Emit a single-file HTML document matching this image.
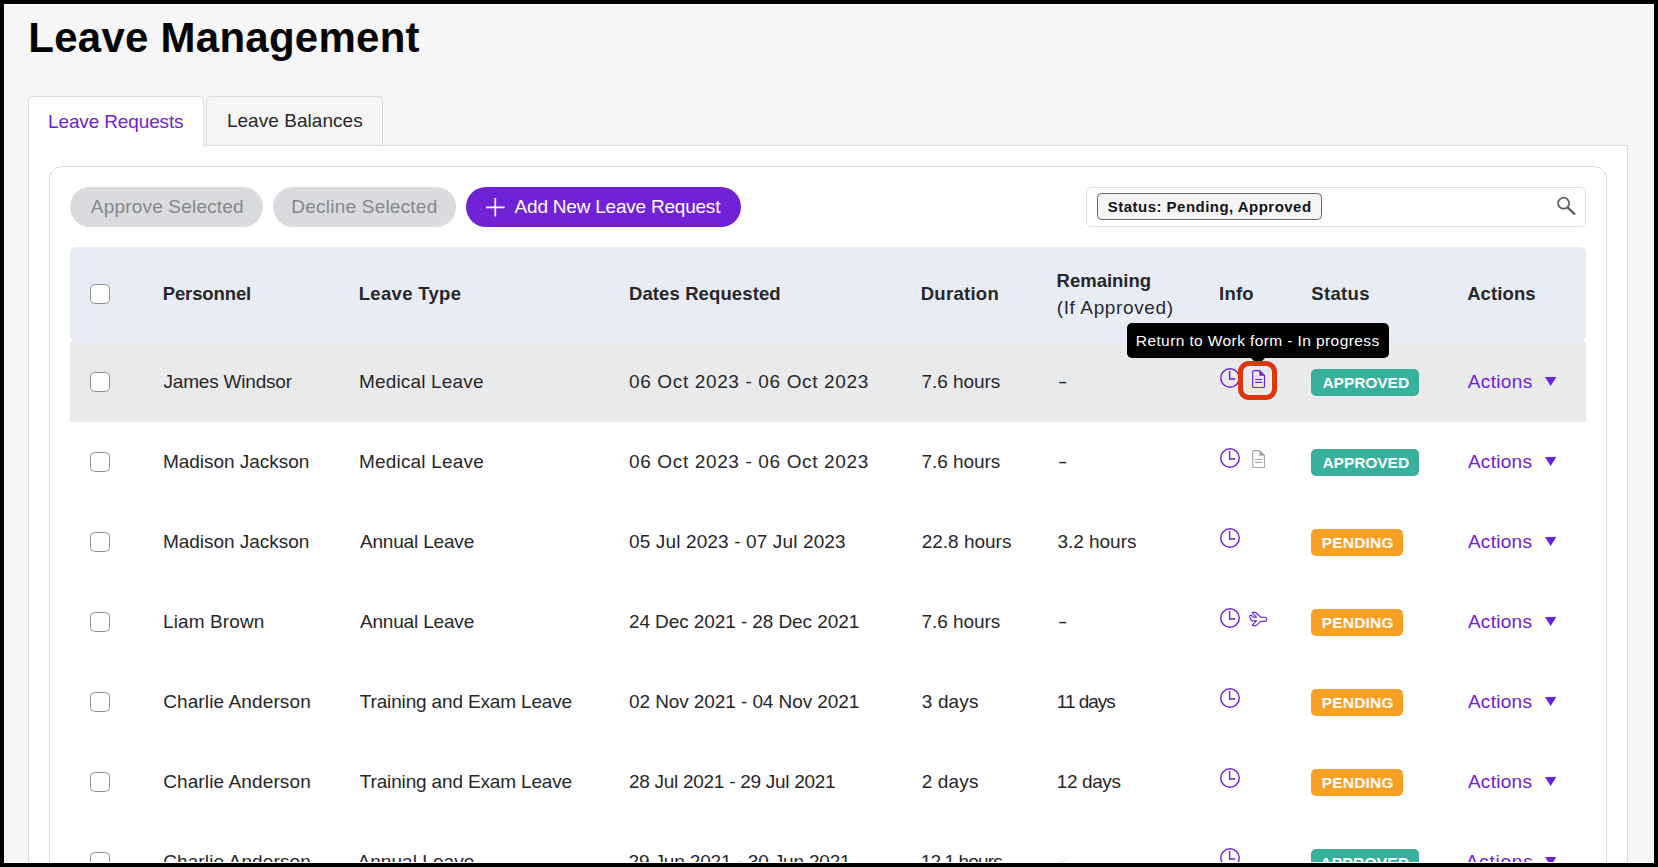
<!DOCTYPE html>
<html lang="en">
<head>
<meta charset="utf-8">
<title>Leave Management</title>
<style>
html,body{margin:0;padding:0}
body{width:1658px;height:867px;overflow:hidden;background:#f6f6f6;font-family:"Liberation Sans", Arial, sans-serif;}
#page{position:relative;width:1658px;height:867px;overflow:hidden;background:#f6f6f6}
.t{position:absolute;white-space:nowrap;margin:0;padding:0;font-weight:400;text-decoration:none}
.ic{position:absolute;overflow:visible}
button{font:inherit;margin:0;padding:0;border:0}
#frame{position:absolute;left:0;top:0;width:1658px;height:867px;box-sizing:border-box;border:4px solid #000;box-shadow:inset 0 0 0 1px #fff;pointer-events:none}
.tab{position:absolute;box-sizing:border-box;top:96px;border:1px solid #d9dbe1;border-bottom:none;border-radius:5px 5px 0 0}
#tabA{left:28px;width:176px;height:50px;background:#fff}
#tabB{left:206px;width:177px;height:49px;background:#f6f6f6}
#panel{position:absolute;box-sizing:border-box;left:28px;top:145px;width:1600px;height:760px;background:#fff;border:1px solid #d9dbe1}
#card{position:absolute;box-sizing:border-box;left:20px;top:20px;width:1558px;height:740px;background:#fff;border:1px solid #dbdce2;border-radius:13px}
.pill{position:absolute;box-sizing:border-box;top:20px;height:40px;border-radius:20px;background:#dadbdf}
.pill.primary{background:#7122d7}
#search{position:absolute;box-sizing:border-box;left:1036px;top:20px;width:500px;height:40px;border:1px solid #dcdee4;border-radius:5px;background:#fff}
#chipbox{position:absolute;box-sizing:border-box;left:10px;top:5px;width:225px;height:27px;border:1px solid #63656a;border-radius:4.5px;background:#f5f5f5}
#thead{position:absolute;left:20px;top:80px;width:1516px;height:95px;background:#e8ecf4;border-radius:6px}
.row{position:absolute;left:20px;width:1516px;height:80px}
.row.hover{background:#e9eaec}
.cb{position:absolute;box-sizing:border-box;left:20px;width:20px;height:20px;border:1px solid #8f9298;border-radius:4.5px;background:#fff}
.badge{position:absolute;left:1241px;top:27px;height:27px;border-radius:5px}
.ok{background:#37b19b;width:108px}
.pend{background:#f8a024;width:92px}
#tooltip{position:absolute;left:1077px;top:156px;width:262px;height:34.7px;background:#000;border-radius:5px}
#tiparrow{position:absolute;left:123.6px;top:34.5px;width:0;height:0;border-left:7.35px solid transparent;border-right:7.35px solid transparent;border-top:7.35px solid #000}
#redbox{position:absolute;box-sizing:border-box;left:1188.4px;top:193.9px;width:38.5px;height:38.9px;border:5px solid #de350b;border-radius:11px}

</style>
</head>
<body>
<div id="page">
<header><h1 class="t" id="title" style="left:28.37px;top:12.00px;font-size:42px;line-height:51px;letter-spacing:0.247px;color:#050506;font-weight:700;">Leave Management</h1></header>
<main id="panel">
<section id="card">
<div class="toolbar">
<button class="pill" disabled style="left:20px;width:193px"><span class="t" id="btn1" style="left:20.79px;top:7.00px;font-size:19px;line-height:25px;letter-spacing:0.191px;color:#85888e;">Approve Selected</span></button>
<button class="pill" disabled style="left:223px;width:183px"><span class="t" id="btn2" style="left:18.36px;top:7.00px;font-size:19px;line-height:25px;letter-spacing:0.217px;color:#85888e;">Decline Selected</span></button>
<button class="pill primary" style="left:416px;width:275px"><svg class="ic" style="left:19px;top:10px" width="20" height="20" viewBox="0 0 20 20"><path d="M10.3 1v18.6M1 10.3h18.6" stroke="#fff" stroke-width="1.7" fill="none"/></svg><span class="t" id="btn3" style="left:48.59px;top:7.00px;font-size:19px;line-height:25px;letter-spacing:-0.218px;color:#ffffff;">Add New Leave Request</span></button>
<div id="search"><div id="chipbox"><span class="t" id="chip" style="left:9.85px;top:2.00px;font-size:15px;line-height:21px;letter-spacing:0.469px;color:#131315;font-weight:700;">Status: Pending, Approved</span></div><svg class="ic" style="left:468px;top:7px" width="24" height="24" viewBox="0 0 24 24"><circle cx="8.6" cy="8.2" r="5.5" fill="none" stroke="#5d6167" stroke-width="1.7"/><path d="M12.8 12.6l6.6 6.2" stroke="#5d6167" stroke-width="2.4" stroke-linecap="round"/></svg></div>
</div>
<div class="table">
<div id="thead"><div class="cb" style="top:37px"></div>
<span class="t" id="h1" style="left:92.73px;top:34.00px;font-size:18.5px;line-height:25px;letter-spacing:-0.122px;color:#27272a;font-weight:700;">Personnel</span>
<span class="t" id="h2" style="left:288.73px;top:34.00px;font-size:18.5px;line-height:25px;letter-spacing:0.314px;color:#27272a;font-weight:700;">Leave Type</span>
<span class="t" id="h3" style="left:558.95px;top:34.00px;font-size:18.5px;line-height:25px;letter-spacing:0.112px;color:#27272a;font-weight:700;">Dates Requested</span>
<span class="t" id="h4" style="left:850.73px;top:34.00px;font-size:18.5px;line-height:25px;letter-spacing:0.273px;color:#27272a;font-weight:700;">Duration</span>
<span class="t" id="h5a" style="left:986.58px;top:21.00px;font-size:18.5px;line-height:25px;letter-spacing:-0.016px;color:#27272a;font-weight:700;">Remaining</span>
<span class="t" id="h5b" style="left:986.76px;top:48.00px;font-size:19px;line-height:25px;letter-spacing:0.620px;color:#2a2a2e;">(If Approved)</span>
<span class="t" id="h6" style="left:1148.99px;top:34.00px;font-size:18.5px;line-height:25px;letter-spacing:0.257px;color:#27272a;font-weight:700;">Info</span>
<span class="t" id="h7" style="left:1241.36px;top:34.00px;font-size:18.5px;line-height:25px;letter-spacing:0.318px;color:#27272a;font-weight:700;">Status</span>
<span class="t" id="h8" style="left:1397.17px;top:34.00px;font-size:18.5px;line-height:25px;letter-spacing:0.103px;color:#27272a;font-weight:700;">Actions</span>
</div>
<div class="row hover" id="row0" style="top:175px">
<div class="cb" style="top:30px"></div>
<span class="t" id="r0n" style="left:93.58px;top:27.00px;font-size:19px;line-height:25px;letter-spacing:-0.207px;color:#27272a;">James Windsor</span>
<span class="t" id="r0t" style="left:288.95px;top:27.00px;font-size:19px;line-height:25px;letter-spacing:0.176px;color:#27272a;">Medical Leave</span>
<span class="t" id="r0d" style="left:559.06px;top:27.00px;font-size:19px;line-height:25px;letter-spacing:0.637px;color:#27272a;">06 Oct 2023 - 06 Oct 2023</span>
<span class="t" id="r0u" style="left:851.61px;top:27.00px;font-size:19px;line-height:25px;letter-spacing:-0.059px;color:#27272a;">7.6 hours</span>
<span class="t" id="r0m" style="left:987.80px;top:27.00px;font-size:19px;line-height:25px;letter-spacing:0.000px;color:#27272a;transform:scaleX(1.5);transform-origin:0 50%;">-</span>
<svg class="ic" style="left:1148.5px;top:25px" width="22" height="22" viewBox="0 0 22 22"><circle cx="11" cy="11.05" r="9.25" fill="none" stroke="#6d22d6" stroke-width="1.45"/><path d="M10.65 4V11.9H16.3" fill="none" stroke="#6d22d6" stroke-width="1.45"/></svg>
<svg class="ic" style="left:1181px;top:26.7px" width="16" height="20" viewBox="0 0 16 20"><path d="M2.6 1.6h6.0l4.9 4.9v11.1a0.9 0.9 0 0 1-0.9 0.9H2.6a0.9 0.9 0 0 1-0.9-0.9V2.5a0.9 0.9 0 0 1 0.9-0.9z" fill="none" stroke="#6d22d6" stroke-width="1.2"/><path d="M8.3 1.6l5.2 5.2H8.3z" fill="#6d22d6"/><path d="M4.1 10.5h7.1M4.1 13.3h7.1" stroke="#6d22d6" stroke-width="1.2"/></svg>
<div class="badge ok"><span class="t" id="r0s" style="left:11.49px;top:3.00px;font-size:15.5px;line-height:21px;letter-spacing:-0.056px;color:#ffffff;font-weight:700;">APPROVED</span></div>
<a class="t" id="r0a" style="left:1397.79px;top:27.00px;font-size:19px;line-height:25px;letter-spacing:0.347px;color:#6d22d6;">Actions</a>
<svg class="ic" style="left:1475.3px;top:35.3px" width="12" height="10" viewBox="0 0 12 10"><path d="M0 0h11.3l-5.65 8.9z" fill="#6d22d6"/></svg>
</div>
<div class="row" id="row1" style="top:255px">
<div class="cb" style="top:30px"></div>
<span class="t" id="r1n" style="left:92.94px;top:27.00px;font-size:19px;line-height:25px;letter-spacing:-0.027px;color:#27272a;">Madison Jackson</span>
<span class="t" id="r1t" style="left:288.94px;top:27.00px;font-size:19px;line-height:25px;letter-spacing:0.194px;color:#27272a;">Medical Leave</span>
<span class="t" id="r1d" style="left:559.02px;top:27.00px;font-size:19px;line-height:25px;letter-spacing:0.639px;color:#27272a;">06 Oct 2023 - 06 Oct 2023</span>
<span class="t" id="r1u" style="left:851.61px;top:27.00px;font-size:19px;line-height:25px;letter-spacing:-0.064px;color:#27272a;">7.6 hours</span>
<span class="t" id="r1m" style="left:987.80px;top:27.00px;font-size:19px;line-height:25px;letter-spacing:0.000px;color:#27272a;transform:scaleX(1.5);transform-origin:0 50%;">-</span>
<svg class="ic" style="left:1148.5px;top:25px" width="22" height="22" viewBox="0 0 22 22"><circle cx="11" cy="11.05" r="9.25" fill="none" stroke="#6d22d6" stroke-width="1.45"/><path d="M10.65 4V11.9H16.3" fill="none" stroke="#6d22d6" stroke-width="1.45"/></svg>
<svg class="ic" style="left:1181px;top:26.7px" width="16" height="20" viewBox="0 0 16 20"><path d="M2.6 1.6h6.0l4.9 4.9v11.1a0.9 0.9 0 0 1-0.9 0.9H2.6a0.9 0.9 0 0 1-0.9-0.9V2.5a0.9 0.9 0 0 1 0.9-0.9z" fill="none" stroke="#a4a7ad" stroke-width="1.2"/><path d="M8.3 1.6l5.2 5.2H8.3z" fill="#a4a7ad"/><path d="M4.1 10.5h7.1M4.1 13.3h7.1" stroke="#a4a7ad" stroke-width="1.2"/></svg>
<div class="badge ok"><span class="t" id="r1s" style="left:11.49px;top:3.00px;font-size:15.5px;line-height:21px;letter-spacing:-0.056px;color:#ffffff;font-weight:700;">APPROVED</span></div>
<a class="t" id="r1a" style="left:1397.88px;top:27.00px;font-size:19px;line-height:25px;letter-spacing:0.298px;color:#6d22d6;">Actions</a>
<svg class="ic" style="left:1475.3px;top:35.3px" width="12" height="10" viewBox="0 0 12 10"><path d="M0 0h11.3l-5.65 8.9z" fill="#6d22d6"/></svg>
</div>
<div class="row" id="row2" style="top:335px">
<div class="cb" style="top:30px"></div>
<span class="t" id="r2n" style="left:92.94px;top:27.00px;font-size:19px;line-height:25px;letter-spacing:-0.027px;color:#27272a;">Madison Jackson</span>
<span class="t" id="r2t" style="left:289.94px;top:27.00px;font-size:19px;line-height:25px;letter-spacing:-0.177px;color:#27272a;">Annual Leave</span>
<span class="t" id="r2d" style="left:559.02px;top:27.00px;font-size:19px;line-height:25px;letter-spacing:0.135px;color:#27272a;">05 Jul 2023 - 07 Jul 2023</span>
<span class="t" id="r2u" style="left:851.69px;top:27.00px;font-size:19px;line-height:25px;letter-spacing:-0.003px;color:#27272a;">22.8 hours</span>
<span class="t" id="r2m" style="left:987.44px;top:27.00px;font-size:19px;line-height:25px;letter-spacing:-0.025px;color:#27272a;">3.2 hours</span>
<svg class="ic" style="left:1148.5px;top:25px" width="22" height="22" viewBox="0 0 22 22"><circle cx="11" cy="11.05" r="9.25" fill="none" stroke="#6d22d6" stroke-width="1.45"/><path d="M10.65 4V11.9H16.3" fill="none" stroke="#6d22d6" stroke-width="1.45"/></svg>
<div class="badge pend"><span class="t" id="r2s" style="left:10.78px;top:3.00px;font-size:15.5px;line-height:21px;letter-spacing:0.182px;color:#ffffff;font-weight:700;">PENDING</span></div>
<a class="t" id="r2a" style="left:1397.88px;top:27.00px;font-size:19px;line-height:25px;letter-spacing:0.298px;color:#6d22d6;">Actions</a>
<svg class="ic" style="left:1475.3px;top:35.3px" width="12" height="10" viewBox="0 0 12 10"><path d="M0 0h11.3l-5.65 8.9z" fill="#6d22d6"/></svg>
</div>
<div class="row" id="row3" style="top:415px">
<div class="cb" style="top:30px"></div>
<span class="t" id="r3n" style="left:92.94px;top:27.00px;font-size:19px;line-height:25px;letter-spacing:0.130px;color:#27272a;">Liam Brown</span>
<span class="t" id="r3t" style="left:289.94px;top:27.00px;font-size:19px;line-height:25px;letter-spacing:-0.177px;color:#27272a;">Annual Leave</span>
<span class="t" id="r3d" style="left:558.92px;top:27.00px;font-size:19px;line-height:25px;letter-spacing:-0.086px;color:#27272a;">24 Dec 2021 - 28 Dec 2021</span>
<span class="t" id="r3u" style="left:851.61px;top:27.00px;font-size:19px;line-height:25px;letter-spacing:-0.064px;color:#27272a;">7.6 hours</span>
<span class="t" id="r3m" style="left:987.80px;top:27.00px;font-size:19px;line-height:25px;letter-spacing:0.000px;color:#27272a;transform:scaleX(1.5);transform-origin:0 50%;">-</span>
<svg class="ic" style="left:1148.5px;top:25px" width="22" height="22" viewBox="0 0 22 22"><circle cx="11" cy="11.05" r="9.25" fill="none" stroke="#6d22d6" stroke-width="1.45"/><path d="M10.65 4V11.9H16.3" fill="none" stroke="#6d22d6" stroke-width="1.45"/></svg>
<svg class="ic" style="left:1174px;top:24px" width="28" height="26" viewBox="0 0 28 26"><path d="M8.9 6.3H11.4L16.8 11.2H20.7A2.1 2.1 0 0 1 20.7 15.4H16.8L12 19.6H8.9Q8 19.5 8.5 18.8L12.4 14.9H8.4Q7.3 14.9 6.9 13.8L5.7 10.5Q5.5 9.4 6.7 9.3H7.5L9.4 11.2H12.4L8.5 7.1Q8 6.4 8.9 6.3Z" fill="none" stroke="#6d22d6" stroke-width="1.15" stroke-linejoin="round"/></svg>
<div class="badge pend"><span class="t" id="r3s" style="left:10.78px;top:3.00px;font-size:15.5px;line-height:21px;letter-spacing:0.182px;color:#ffffff;font-weight:700;">PENDING</span></div>
<a class="t" id="r3a" style="left:1397.88px;top:27.00px;font-size:19px;line-height:25px;letter-spacing:0.298px;color:#6d22d6;">Actions</a>
<svg class="ic" style="left:1475.3px;top:35.3px" width="12" height="10" viewBox="0 0 12 10"><path d="M0 0h11.3l-5.65 8.9z" fill="#6d22d6"/></svg>
</div>
<div class="row" id="row4" style="top:495px">
<div class="cb" style="top:30px"></div>
<span class="t" id="r4n" style="left:93.13px;top:27.00px;font-size:19px;line-height:25px;letter-spacing:0.122px;color:#27272a;">Charlie Anderson</span>
<span class="t" id="r4t" style="left:289.75px;top:27.00px;font-size:19px;line-height:25px;letter-spacing:-0.154px;color:#27272a;">Training and Exam Leave</span>
<span class="t" id="r4d" style="left:559.02px;top:27.00px;font-size:19px;line-height:25px;letter-spacing:-0.090px;color:#27272a;">02 Nov 2021 - 04 Nov 2021</span>
<span class="t" id="r4u" style="left:851.82px;top:27.00px;font-size:19px;line-height:25px;letter-spacing:0.132px;color:#27272a;">3 days</span>
<span class="t" id="r4m" style="left:986.84px;top:27.00px;font-size:19px;line-height:25px;letter-spacing:-1.033px;color:#27272a;">11 days</span>
<svg class="ic" style="left:1148.5px;top:25px" width="22" height="22" viewBox="0 0 22 22"><circle cx="11" cy="11.05" r="9.25" fill="none" stroke="#6d22d6" stroke-width="1.45"/><path d="M10.65 4V11.9H16.3" fill="none" stroke="#6d22d6" stroke-width="1.45"/></svg>
<div class="badge pend"><span class="t" id="r4s" style="left:10.78px;top:3.00px;font-size:15.5px;line-height:21px;letter-spacing:0.182px;color:#ffffff;font-weight:700;">PENDING</span></div>
<a class="t" id="r4a" style="left:1397.88px;top:27.00px;font-size:19px;line-height:25px;letter-spacing:0.298px;color:#6d22d6;">Actions</a>
<svg class="ic" style="left:1475.3px;top:35.3px" width="12" height="10" viewBox="0 0 12 10"><path d="M0 0h11.3l-5.65 8.9z" fill="#6d22d6"/></svg>
</div>
<div class="row" id="row5" style="top:575px">
<div class="cb" style="top:30px"></div>
<span class="t" id="r5n" style="left:93.13px;top:27.00px;font-size:19px;line-height:25px;letter-spacing:0.122px;color:#27272a;">Charlie Anderson</span>
<span class="t" id="r5t" style="left:289.75px;top:27.00px;font-size:19px;line-height:25px;letter-spacing:-0.154px;color:#27272a;">Training and Exam Leave</span>
<span class="t" id="r5d" style="left:558.92px;top:27.00px;font-size:19px;line-height:25px;letter-spacing:-0.275px;color:#27272a;">28 Jul 2021 - 29 Jul 2021</span>
<span class="t" id="r5u" style="left:851.69px;top:27.00px;font-size:19px;line-height:25px;letter-spacing:0.158px;color:#27272a;">2 days</span>
<span class="t" id="r5m" style="left:986.84px;top:27.00px;font-size:19px;line-height:25px;letter-spacing:-0.413px;color:#27272a;">12 days</span>
<svg class="ic" style="left:1148.5px;top:25px" width="22" height="22" viewBox="0 0 22 22"><circle cx="11" cy="11.05" r="9.25" fill="none" stroke="#6d22d6" stroke-width="1.45"/><path d="M10.65 4V11.9H16.3" fill="none" stroke="#6d22d6" stroke-width="1.45"/></svg>
<div class="badge pend"><span class="t" id="r5s" style="left:10.78px;top:3.00px;font-size:15.5px;line-height:21px;letter-spacing:0.182px;color:#ffffff;font-weight:700;">PENDING</span></div>
<a class="t" id="r5a" style="left:1397.88px;top:27.00px;font-size:19px;line-height:25px;letter-spacing:0.298px;color:#6d22d6;">Actions</a>
<svg class="ic" style="left:1475.3px;top:35.3px" width="12" height="10" viewBox="0 0 12 10"><path d="M0 0h11.3l-5.65 8.9z" fill="#6d22d6"/></svg>
</div>
<div class="row" id="row6" style="top:655px">
<div class="cb" style="top:30px"></div>
<span class="t" id="r6n" style="left:93.13px;top:27.00px;font-size:19px;line-height:25px;letter-spacing:0.129px;color:#27272a;">Charlie Anderson</span>
<span class="t" id="r6t" style="left:287.52px;top:27.00px;font-size:19px;line-height:25px;letter-spacing:0.057px;color:#27272a;">Annual Leave</span>
<span class="t" id="r6d" style="left:558.60px;top:27.00px;font-size:19px;line-height:25px;letter-spacing:-0.167px;color:#27272a;">29 Jun 2021 - 30 Jun 2021</span>
<span class="t" id="r6u" style="left:850.76px;top:27.00px;font-size:19px;line-height:25px;letter-spacing:-0.879px;color:#27272a;">12.1 hours</span>
<span class="t" id="r6m" style="left:988.05px;top:27.00px;font-size:19px;line-height:25px;letter-spacing:0.000px;color:#27272a;transform:scaleX(1.5);transform-origin:0 50%;">-</span>
<svg class="ic" style="left:1148.5px;top:25px" width="22" height="22" viewBox="0 0 22 22"><circle cx="11" cy="11.05" r="9.25" fill="none" stroke="#6d22d6" stroke-width="1.45"/><path d="M10.65 4V11.9H16.3" fill="none" stroke="#6d22d6" stroke-width="1.45"/></svg>
<div class="badge ok"><span class="t" id="r6s" style="left:9.21px;top:3.00px;font-size:15.5px;line-height:21px;letter-spacing:0.284px;color:#ffffff;font-weight:700;">APPROVED</span></div>
<a class="t" id="r6a" style="left:1395.67px;top:27.00px;font-size:19px;line-height:25px;letter-spacing:0.785px;color:#6d22d6;">Actions</a>
<svg class="ic" style="left:1475.3px;top:35.3px" width="12" height="10" viewBox="0 0 12 10"><path d="M0 0h11.3l-5.65 8.9z" fill="#6d22d6"/></svg>
</div>
</div>
<div id="tooltip" role="tooltip"><span class="t" id="tip" style="left:8.81px;top:7.00px;font-size:15.5px;line-height:21px;letter-spacing:0.399px;color:#ffffff;">Return to Work form - In progress</span><div id="tiparrow"></div></div>
<div id="redbox"></div>
</section>
</main>
<nav class="tabs"><a class="tab" id="tabA"><span class="t" id="tab1" style="left:19.07px;top:12.00px;font-size:19px;line-height:25px;letter-spacing:-0.138px;color:#6d22d6;">Leave Requests</span></a><a class="tab" id="tabB"><span class="t" id="tab2" style="left:19.88px;top:11.00px;font-size:19px;line-height:25px;letter-spacing:0.046px;color:#27272a;">Leave Balances</span></a></nav>
<div id="frame"></div>
</div>
</body>
</html>
